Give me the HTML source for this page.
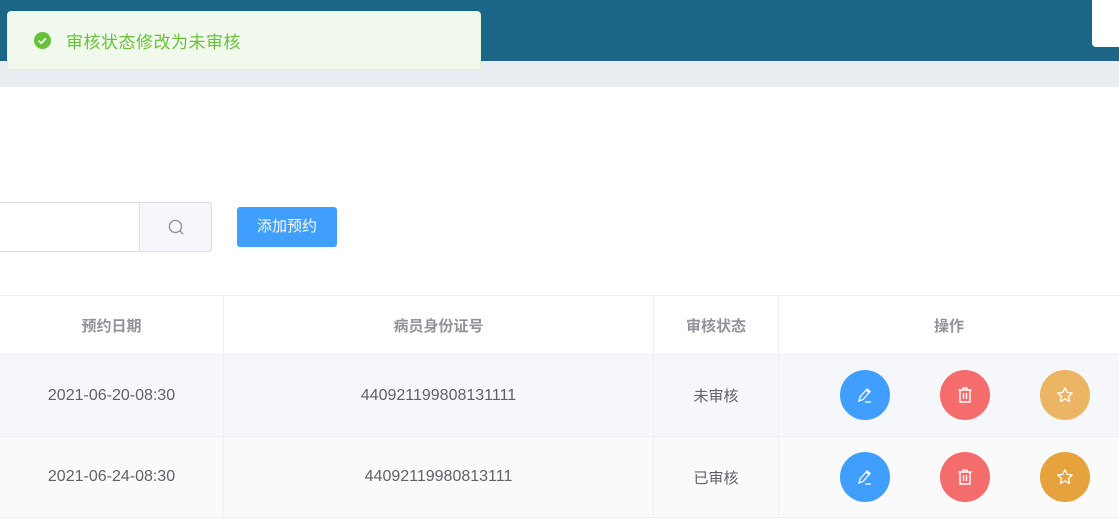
<!DOCTYPE html>
<html><head><meta charset="utf-8"><style>
*{margin:0;padding:0;box-sizing:border-box}
body{width:1119px;height:520px;overflow:hidden;background:#fff;font-family:"Liberation Sans","Noto Sans CJK SC",sans-serif;position:relative}
.hdr{position:absolute;left:0;top:0;width:1119px;height:61px;background:#1b6686}
.band{position:absolute;left:0;top:61px;width:1119px;height:26px;background:#e9edf1}
.wbox{position:absolute;left:1092px;top:0;width:40px;height:47px;background:#fff;border-radius:0 0 0 4px}
.toast{position:absolute;left:7px;top:11px;width:474px;height:59px;background:#f0f9eb;border:1px solid #e1f3d8;border-radius:4px}
.toast .ic{position:absolute;left:26px;top:20px}
.toast .t{position:absolute;left:58px;top:16px;font-size:17px;letter-spacing:.5px;color:#67c23a}
.inp{position:absolute;left:-5px;top:202px;width:217px;height:50px;border:1px solid #dcdfe6;border-radius:4px;background:#fff}
.app{position:absolute;left:139px;top:202px;width:73px;height:50px;background:#f5f7fa;border:1px solid #dcdfe6;border-radius:0 4px 4px 0}
.btn{position:absolute;left:237px;top:207px;width:100px;height:40px;background:#409eff;border-radius:3px;color:#fff;font-size:15px;text-align:center;line-height:40px}
.row{position:absolute;left:0;width:1119px;border-top:1px solid #ebeef5}
.cell{position:absolute;top:0;height:100%;display:flex;align-items:center;justify-content:center;font-size:15px;color:#606266;border-right:1px solid #ebeef5}
.n{font-size:16px}
.h .cell{color:#909399;font-weight:bold;font-size:15px}
.cb{position:absolute;width:50px;height:50px;border-radius:50%;display:flex;align-items:center;justify-content:center}
</style></head><body>
<div class="hdr"></div><div class="band"></div><div class="wbox"></div>
<div class="toast"><svg class="ic" width="17" height="17" viewBox="0 0 16 16"><circle cx="8" cy="8" r="8" fill="#67c23a"/><path d="M4.5 8.2l2.3 2.3 4.5-4.6" stroke="#fff" stroke-width="1.6" fill="none"/></svg><div class="t">审核状态修改为未审核</div></div>
<div class="inp"></div>
<div class="app"><svg style="position:absolute;left:28px;top:16px" width="17" height="17" viewBox="0 0 16 16"><circle cx="7" cy="7" r="5.7" stroke="#909399" stroke-width="1.3" fill="none"/><path d="M11.2 11.2l3 3" stroke="#909399" stroke-width="1.3"/></svg></div>
<div class="btn">添加预约</div>

<div class="row h" style="top:295px;height:59px;background:#fff">
<div class="cell" style="left:0;width:224px">预约日期</div>
<div class="cell" style="left:224px;width:430px">病员身份证号</div>
<div class="cell" style="left:654px;width:125px">审核状态</div>
<div class="cell" style="left:779px;width:340px;border-right:0">操作</div>
</div>
<div class="row" style="top:354px;height:82px;background:#f5f7fa">
<div class="cell n" style="left:0;width:224px">2021-06-20-08:30</div>
<div class="cell n" style="left:224px;width:430px">440921199808131111</div>
<div class="cell" style="left:654px;width:125px">未审核</div>
<div class="cell" style="left:779px;width:340px;border-right:0"></div>
</div>
<div class="row" style="top:436px;height:82px;background:#fafafa;border-bottom:1px solid #ebeef5">
<div class="cell n" style="left:0;width:224px">2021-06-24-08:30</div>
<div class="cell n" style="left:224px;width:430px">44092119980813111</div>
<div class="cell" style="left:654px;width:125px">已审核</div>
<div class="cell" style="left:779px;width:340px;border-right:0"></div>
</div>

<div id="b"></div>
<script>
var pen='<svg width="18" height="18" viewBox="0 0 18 18" fill="none" stroke="#fff" stroke-width="1.3"><path d="M3 15l1-4 7-8 3 2.5-7 8z M10 4l3 2.5"/><path d="M9 16h6"/></svg>';
var del='<svg width="18" height="18" viewBox="0 0 18 18" fill="none" stroke="#fff" stroke-width="1.4"><path d="M2.5 4h13M7 4V2h4v2M4 4v12h10V4M7.5 7v6M10.5 7v6"/></svg>';
var star='<svg width="18" height="18" viewBox="0 0 18 18" fill="none" stroke="#fff" stroke-width="1.3" stroke-linejoin="round"><path d="M9 1.8l2.2 4.6 5 .6-3.7 3.4 1 5L9 13l-4.5 2.4 1-5L1.8 7l5-.6z"/></svg>';
var h='';[370,452].forEach(function(t,i){
h+='<div class="cb" style="left:840px;top:'+t+'px;background:#409eff">'+pen+'</div>';
h+='<div class="cb" style="left:940px;top:'+t+'px;background:#f56c6c">'+del+'</div>';
h+='<div class="cb" style="left:1040px;top:'+t+'px;background:'+(i?'#e6a23c':'#ebb563')+'">'+star+'</div>';});
document.getElementById('b').innerHTML=h;
</script>
</body></html>
